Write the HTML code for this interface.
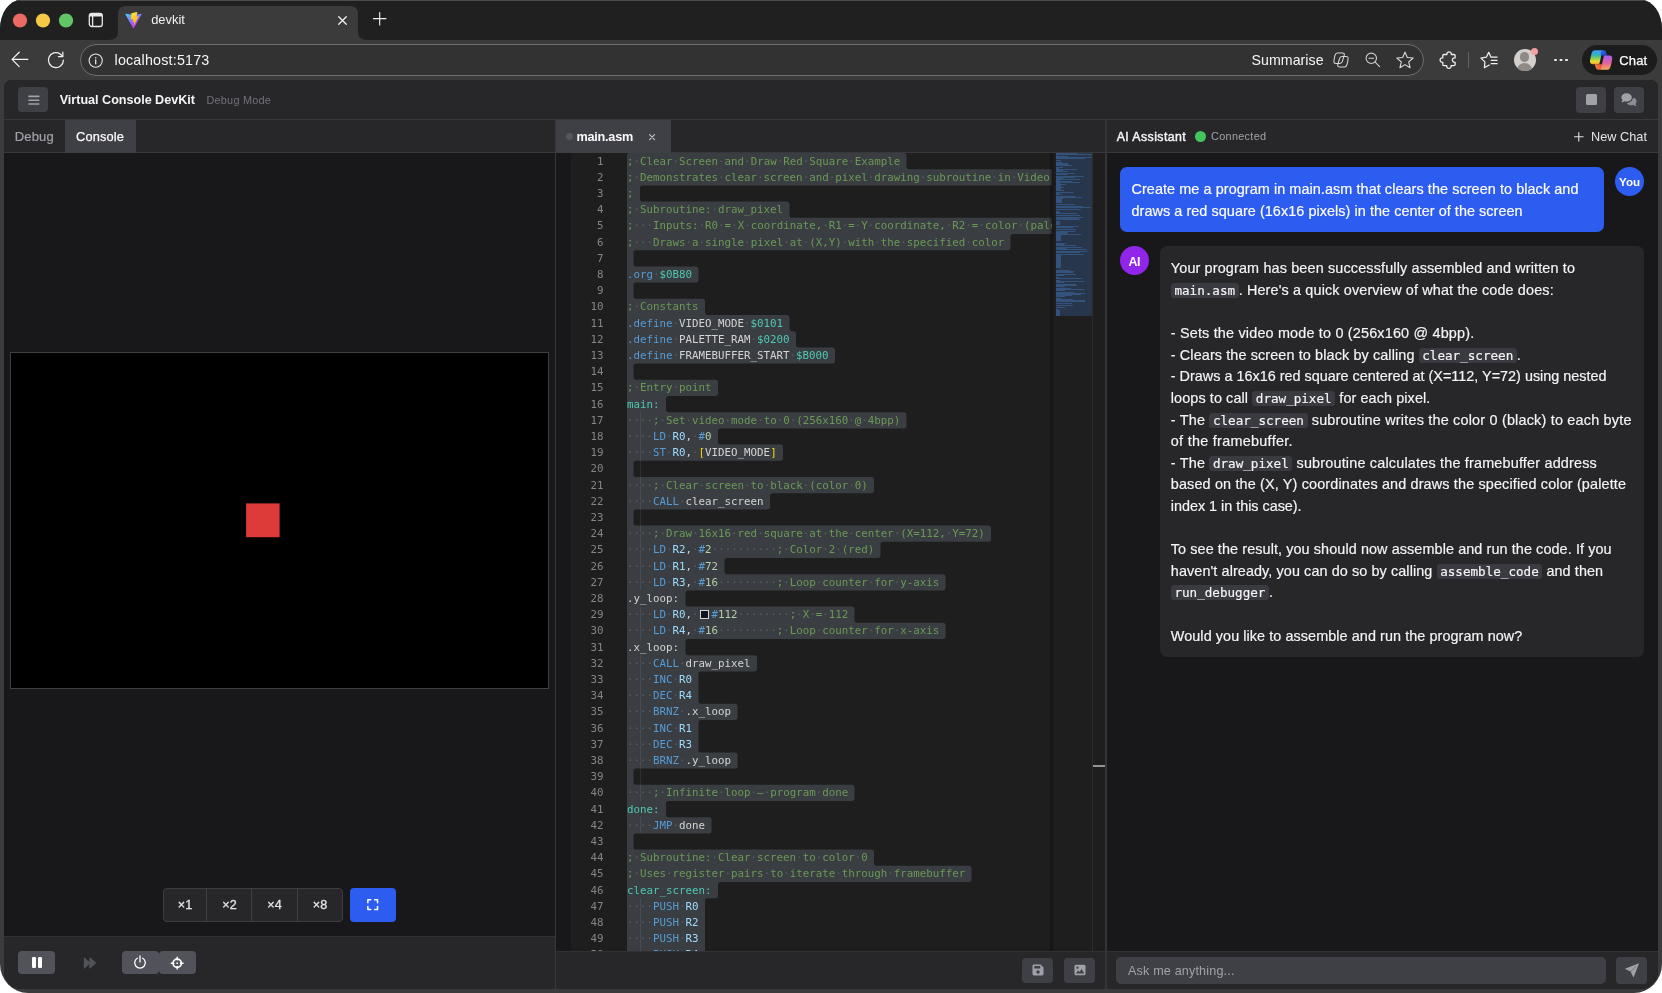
<!DOCTYPE html>
<html lang="en">
<head>
<meta charset="utf-8">
<title>devkit</title>
<style>
*{box-sizing:border-box}
html,body{margin:0;padding:0}
body{width:1662px;height:993px;overflow:hidden;background:#fff;font-family:"Liberation Sans",sans-serif;color:#e4e4e7;-webkit-font-smoothing:antialiased}
.abs{position:absolute}
#win{will-change:transform;position:absolute;left:0;top:0;width:1662px;height:993px;background:#3b3b3b;border-radius:21px 21px 28px 28px / 29px 29px 29px 29px;overflow:hidden}
#titlebar{position:absolute;left:0;top:0;width:1662px;height:40px;background:#202020;border-top:1px solid #4b4b4b}
#toolbar{position:absolute;left:0;top:40px;width:1662px;height:40px;background:#3b3b3b}
#urlbar{position:absolute;left:80px;top:44px;width:1344px;height:32px;border:1px solid #6e6e6e;border-radius:16px;background:#323232}
.ct{position:absolute;white-space:pre;line-height:1}
#page{position:absolute;left:4px;top:80px;width:1654px;height:909px;background:#18181b;border-radius:8px 8px 18px 18px;overflow:hidden}
.btn{position:absolute;background:#3f3f46;border-radius:4px}
.btn2{position:absolute;background:#52525b;border-radius:4px}
svg{position:absolute;overflow:visible}
.mono{font-family:"DejaVu Sans Mono","Liberation Mono",monospace}

.sc{top:899px;text-align:center;font-size:12.6px;color:#e4e4e7;-webkit-text-stroke:0.3px #e4e4e7}
.cl{position:absolute;white-space:pre;font-size:14.4px;line-height:21.6px;height:21.6px;-webkit-text-stroke:0.18px currentColor}
.ic{font-family:"DejaVu Sans Mono","Liberation Mono",monospace;font-size:12.6px;letter-spacing:0;background:#3a3a41;border-radius:3.6px;padding:0 3.6px}
</style>
</head>
<body>
<div id="win">
<div id="titlebar"></div>
<!-- active tab shape -->
<svg style="left:0;top:0" width="400" height="41" viewBox="0 0 400 41"><path d="M108 40 Q118 40 118 32 L118 14 Q118 6 126 6 L350 6 Q358 6 358 14 L358 32 Q358 40 367 40 L367 41 L108 41 Z" fill="#3b3b3b"/></svg>
<svg style="left:0;top:0" width="80" height="40" viewBox="0 0 80 40"><circle cx="20" cy="20.5" r="7.1" fill="#ec6a66"/><circle cx="43" cy="20.5" r="7.1" fill="#f4c945"/><circle cx="66" cy="20.5" r="7.1" fill="#62c566"/></svg>
<!-- tab overview icon -->
<svg style="left:88px;top:12px" width="16" height="16" viewBox="0 0 16 16"><rect x="1.3" y="1.3" width="13" height="13.2" rx="2.6" fill="none" stroke="#e8e8e8" stroke-width="1.3"/><path d="M1.3 4.4 L14.3 4.4 L14.3 3.6 Q14.3 1.3 12 1.3 L3.6 1.3 Q1.3 1.3 1.3 3.6 Z" fill="#e8e8e8"/><path d="M4.6 4 L4.6 14.4" stroke="#e8e8e8" stroke-width="1.3"/></svg>
<!-- vite icon -->
<svg style="left:124.5px;top:11.5px" width="17" height="17" viewBox="0 0 32 32"><defs><linearGradient id="vg1" x1="0" y1="0" x2="0.6" y2="0.85"><stop offset="0" stop-color="#41d1ff"/><stop offset="1" stop-color="#bd34fe"/></linearGradient><linearGradient id="vg2" x1="0.4" y1="0" x2="0.55" y2="1"><stop offset="0" stop-color="#ffea83"/><stop offset="0.1" stop-color="#ffdd35"/><stop offset="1" stop-color="#ffa800"/></linearGradient></defs><path d="M31 4.8 L16.9 30 a1 1 0 0 1 -1.8 0 L0.9 4.8 a1 1 0 0 1 1.1 -1.5 L16 5.8 L30 3.3 a1 1 0 0 1 1 1.5 Z" fill="url(#vg1)"/><path d="M22.6 0.2 L12.3 2.2 a0.5 0.5 0 0 0 -0.4 0.5 L11.2 13.5 a0.5 0.5 0 0 0 0.6 0.5 l2.9 -0.7 a0.5 0.5 0 0 1 0.6 0.6 l-0.9 4.2 a0.5 0.5 0 0 0 0.6 0.6 l1.8 -0.5 a0.5 0.5 0 0 1 0.6 0.6 l-1.4 6.6 c-0.1 0.4 0.5 0.6 0.7 0.3 l0.2 -0.3 8.5 -16.8 a0.5 0.5 0 0 0 -0.5 -0.7 l-3 0.6 a0.5 0.5 0 0 1 -0.6 -0.6 l1.9 -6.6 a0.5 0.5 0 0 0 -0.6 -0.6 Z" fill="url(#vg2)"/></svg>
<div class="ct" id="f_devkit" style="left:151.2px;top:13.5px;font-size:12.9px;color:#f2f2f2;letter-spacing:0.010px">devkit</div>
<svg style="left:337.8px;top:15.8px" width="9" height="9" viewBox="0 0 10 10"><path d="M0.8 0.8 L9.2 9.2 M9.2 0.8 L0.8 9.2" stroke="#f0f0f0" stroke-width="1.45" stroke-linecap="round"/></svg>
<svg style="left:372.7px;top:12.1px" width="13.4" height="13.4" viewBox="0 0 14 14"><path d="M7 0.5 L7 13.5 M0.5 7 L13.5 7" stroke="#f0f0f0" stroke-width="1.2" stroke-linecap="round"/></svg>
<div id="toolbar"></div>
<!-- back -->
<svg style="left:11px;top:51px" width="18" height="17" viewBox="0 0 18 17"><path d="M1.3 8.4 L16.8 8.4 M8.2 1.2 L1.1 8.4 L8.2 15.6" fill="none" stroke="#f2f2f2" stroke-width="1.25" stroke-linecap="round" stroke-linejoin="round"/></svg>
<!-- reload -->
<svg style="left:47px;top:51px" width="18" height="18" viewBox="0 0 18 18"><path d="M16.4 9.2 A7.5 7.5 0 1 1 12.9 2.7 L15.6 5.4" fill="none" stroke="#f2f2f2" stroke-width="1.25" stroke-linecap="round"/><path d="M15.8 1.2 L15.8 5.6 L11.4 5.6" fill="none" stroke="#f2f2f2" stroke-width="1.25" stroke-linecap="round" stroke-linejoin="round"/></svg>
<div id="urlbar"></div>
<!-- info -->
<svg style="left:88px;top:52.5px" width="16" height="16" viewBox="0 0 16 16"><circle cx="7.7" cy="7.6" r="6.6" fill="none" stroke="#e6e6e6" stroke-width="1.1"/><circle cx="7.7" cy="4.8" r="0.8" fill="#e6e6e6"/><path d="M7.7 6.8 L7.7 10.8" stroke="#e6e6e6" stroke-width="1.3" stroke-linecap="round"/></svg>
<div class="ct" id="f_url" style="left:114.5px;top:52.5px;font-size:14.3px;color:#f5f5f5;letter-spacing:0.199px">localhost:5173</div>
<div class="ct" id="f_sum" style="left:1251.5px;top:52.7px;font-size:14.2px;color:#f5f5f5;letter-spacing:0.044px">Summarise</div>
<!-- summarise/copilot glyph -->
<svg style="left:1333px;top:52px" width="16" height="16" viewBox="0 0 16 16" fill="none" stroke="#d8d8d8" stroke-width="1.05" stroke-linejoin="round"><path d="M4.4 0.9 H9.4 Q11.9 0.9 11.2 3.3 L9.3 9.6 Q8.7 11.4 6.8 11.4 H3 Q0.6 11.4 0.9 9 Q1.2 6 2 3.3 Q2.7 0.9 4.4 0.9 Z"/><path d="M11.6 14.9 H6.6 Q4.1 14.9 4.8 12.5 L6.7 6.2 Q7.3 4.4 9.2 4.4 H13 Q15.4 4.4 15.1 6.8 Q14.8 9.8 14 12.5 Q13.3 14.9 11.6 14.9 Z"/></svg>
<!-- zoom out -->
<svg style="left:1365px;top:52px" width="16" height="16" viewBox="0 0 16 16" fill="none" stroke="#cfcfcf" stroke-width="1.1" stroke-linecap="round"><circle cx="6.3" cy="6.3" r="5.2"/><path d="M10.2 10.2 L14.6 14.6 M3.9 6.3 L8.7 6.3"/></svg>
<!-- star -->
<svg style="left:1396px;top:51px" width="18" height="18" viewBox="0 0 18 18"><path d="M9.00 1.10 L11.29 6.54 L17.18 7.04 L12.71 10.91 L14.05 16.66 L9.00 13.60 L3.95 16.66 L5.29 10.91 L0.82 7.04 L6.71 6.54 Z" fill="none" stroke="#dcdcdc" stroke-width="1.1" stroke-linejoin="round"/></svg>
<!-- extensions -->
<svg style="left:1440px;top:51px" width="18" height="18" viewBox="0 0 18 18"><path d="M3.9 3.5 H6.9 A2.25 2.25 0 1 1 11.3 3.5 H14 Q15.1 3.5 15.1 4.6 V6.9 A2.25 2.25 0 1 0 15.1 11.3 V13.6 Q15.1 14.7 14 14.7 H11.1 A2.25 2.25 0 1 1 6.7 14.7 H3.9 Q2.8 14.7 2.8 13.6 V11.3 A2.25 2.25 0 1 1 2.8 6.9 V4.6 Q2.8 3.5 3.9 3.5 Z" fill="none" stroke="#f0f0f0" stroke-width="1.3" stroke-linejoin="round"/></svg>
<div class="abs" style="left:1468px;top:52px;width:1px;height:16px;background:#606060"></div>
<!-- favourites -->
<svg style="left:1480px;top:51px" width="19" height="18" viewBox="0 0 19 18" fill="none" stroke="#f0f0f0" stroke-width="1.25" stroke-linejoin="round" stroke-linecap="round"><path d="M10.9 5.9 L8.75 1.3 L6.3 6.2 L0.9 7.1 L4.9 10.9 L4.4 16.7 L9.2 14"/><path d="M11.2 6 H17.1 M11.2 9.3 H17.1 M11.2 12.7 H17.1"/></svg>
<!-- avatar -->
<div class="abs" style="left:1513.8px;top:48.8px;width:22.4px;height:22.4px;border-radius:50%;background:#d2cfcc;overflow:hidden"><div class="abs" style="left:6.1px;top:3.4px;width:9.6px;height:9.6px;border-radius:50%;background:#8f8a86"></div><div class="abs" style="left:3.4px;top:14.3px;width:15px;height:13px;border-radius:50%;background:#8f8a86"></div></div>
<div class="abs" style="left:1530.5px;top:47.8px;width:7.6px;height:7.6px;border-radius:50%;background:#f1a2a0"></div>
<!-- dots -->
<div class="abs" style="left:1554px;top:58.7px;width:2.8px;height:2.8px;border-radius:50%;background:#f0f0f0;box-shadow:5.5px 0 0 #f0f0f0,11px 0 0 #f0f0f0"></div>
<!-- chat pill -->
<div class="abs" style="left:1581.5px;top:44.5px;width:75.5px;height:30.5px;border-radius:16px;background:#1c1c1c"></div>
<svg style="left:1589px;top:49px" width="24" height="22" viewBox="0 0 24 22"><defs><linearGradient id="cg1" x1="0" y1="0" x2="0" y2="1"><stop offset="0" stop-color="#3d9bf8"/><stop offset="0.35" stop-color="#36b3b8"/><stop offset="0.6" stop-color="#8fcf52"/><stop offset="0.82" stop-color="#efdc32"/><stop offset="1" stop-color="#f0a033"/></linearGradient><linearGradient id="cg2" x1="0" y1="0" x2="0" y2="1"><stop offset="0" stop-color="#a65df6"/><stop offset="0.5" stop-color="#e0609f"/><stop offset="1" stop-color="#f8a958"/></linearGradient><linearGradient id="cg3" x1="0" y1="0" x2="1" y2="1"><stop offset="0" stop-color="#2f74ea"/><stop offset="1" stop-color="#1a3cc4"/></linearGradient><linearGradient id="cg4" x1="0" y1="0" x2="1" y2="0"><stop offset="0" stop-color="#f0813a"/><stop offset="1" stop-color="#ee5238"/></linearGradient></defs><path d="M5.6 1.2 H13.6 L10.2 15.2 H4 Q0.6 15.2 1 11.8 Q1.6 7 3 3.2 Q3.8 1.2 5.6 1.2 Z" fill="url(#cg1)"/><path d="M5.8 15.2 H13.2 L11.8 20.8 H9.4 Q7.4 20.8 6.8 18.8 Z" fill="url(#cg4)"/><path d="M12.2 1.2 H14.6 Q16.6 1.2 17.2 3.2 L18.3 6.6 H11.6 Z" fill="url(#cg3)"/><path d="M15 6.6 H20 Q23.6 6.6 23.2 10 Q22.6 15 21.2 18.6 Q20.4 20.8 18.6 20.8 H11.6 Z" fill="url(#cg2)"/></svg>
<div class="ct" id="f_chat" style="left:1619.2px;top:54.3px;font-size:13px;color:#fafafa;-webkit-text-stroke:0.25px #fafafa;letter-spacing:0.195px">Chat</div>
<div id="page"><div class="abs" id="pg" style="left:-4px;top:-80px;width:1662px;height:993px">
<!-- app header -->
<div class="abs" style="left:4px;top:80px;width:1654px;height:39.5px;background:#27272a"></div>
<div class="abs" style="left:4px;top:119px;width:1654px;height:1px;background:#37373c"></div>
<div class="btn" style="left:18px;top:87px;width:30.3px;height:25.3px"></div>
<svg style="left:27.5px;top:95px" width="12" height="11" viewBox="0 0 12 11"><path d="M1 1.4 H10.8 M1 5.2 H10.8 M1 9 H10.8" stroke="#a1a1aa" stroke-width="1.6" stroke-linecap="round"/></svg>
<div class="ct" id="f_title" style="left:59.7px;top:94.3px;font-size:12.6px;font-weight:bold;color:#f4f4f5;letter-spacing:-0.013px">Virtual Console DevKit</div>
<div class="ct" id="f_dm" style="left:206.5px;top:95.3px;font-size:10.9px;color:#71717a;letter-spacing:0.212px">Debug Mode</div>
<div class="btn" style="left:1576px;top:87px;width:30px;height:25.5px"></div>
<div class="abs" style="left:1586px;top:94.3px;width:10.5px;height:11px;border-radius:1.5px;background:#a1a1aa"></div>
<div class="btn" style="left:1613.5px;top:87px;width:30px;height:25.5px"></div>
<svg style="left:1620.5px;top:93px" width="16" height="13" viewBox="0 0 16 13"><path d="M5.6 0.3 C2.7 0.3 0.4 2.1 0.4 4.4 C0.4 5.4 0.85 6.3 1.6 7 C1.4 7.8 0.9 8.5 0.5 8.9 C0.4 9 0.5 9.2 0.7 9.2 C1.8 9.2 2.8 8.7 3.4 8.2 C4.1 8.4 4.8 8.5 5.6 8.5 C8.5 8.5 10.8 6.7 10.8 4.4 C10.8 2.1 8.5 0.3 5.6 0.3 Z" fill="#a1a1aa"/><path d="M11.9 4.6 C13.9 5 15.6 6.4 15.6 8.3 C15.6 9.3 15.15 10.2 14.4 10.9 C14.6 11.7 15.1 12.3 15.5 12.7 C15.6 12.8 15.5 13 15.3 13 C14.2 13 13.2 12.5 12.6 12 C11.9 12.2 11.2 12.3 10.4 12.3 C8.4 12.3 6.6 11.4 5.8 10 C9.2 9.9 12 7.6 12 4.6 Z" fill="#a1a1aa" opacity="0.8"/></svg>
<!-- tab rows -->
<div class="abs" style="left:4px;top:120px;width:1654px;height:32.5px;background:#27272a"></div>
<div class="abs" style="left:4px;top:152px;width:1654px;height:1px;background:#37373c"></div>
<!-- left tabs -->
<div class="abs" style="left:64.5px;top:120px;width:71px;height:32.5px;background:#3f3f46"></div>
<div class="ct" id="f_dbg" style="left:14.8px;top:130.2px;font-size:13px;color:#a1a1aa;-webkit-text-stroke:0.2px #a1a1aa;letter-spacing:0.138px">Debug</div>
<div class="ct" id="f_con" style="left:76px;top:131px;font-size:12.8px;color:#fafafa;-webkit-text-stroke:0.25px #fafafa;letter-spacing:0.164px">Console</div>
<!-- canvas -->
<div class="abs" style="left:10px;top:351.5px;width:539px;height:337.5px;background:#000;border:1px solid #3f3f46"></div>
<svg style="left:240px;top:500px" width="46" height="42" viewBox="0 0 46 42"><rect x="6.1" y="3.4" width="33.5" height="33.8" fill="#dd3a3a"/></svg>
<!-- scale buttons -->
<div class="abs" style="left:163px;top:888px;width:180px;height:34px;background:#27272a;border:1px solid #3c3c42;border-radius:4px"></div>
<div class="abs" style="left:206px;top:888px;width:1px;height:34px;background:#3f3f46"></div>
<div class="abs" style="left:251px;top:888px;width:1px;height:34px;background:#3f3f46"></div>
<div class="abs" style="left:297px;top:888px;width:1px;height:34px;background:#3f3f46"></div>
<div class="ct sc" style="left:163px;width:44px">×1</div>
<div class="ct sc" style="left:207px;width:45px">×2</div>
<div class="ct sc" style="left:252px;width:45px">×4</div>
<div class="ct sc" style="left:297px;width:46px">×8</div>
<div class="abs" style="left:350px;top:888px;width:46px;height:34px;background:#2d5cf0;border-radius:4px"></div>
<svg style="left:367.1px;top:899.1px" width="11.4" height="11.4" viewBox="0 0 12 12"><path d="M0.9 4 V0.9 H4 M8 0.9 H11.1 V4 M11.1 8 V11.1 H8 M4 11.1 H0.9 V8" fill="none" stroke="#fff" stroke-width="1.6" stroke-linejoin="round" stroke-linecap="round"/></svg>
<!-- left bottom bar -->
<div class="abs" style="left:4px;top:936px;width:551px;height:53px;background:#27272a;border-top:1px solid #303035"></div>
<div class="btn2" style="left:18px;top:951px;width:37.3px;height:23.2px"></div>
<div class="abs" style="left:32px;top:957.3px;width:3.7px;height:11.2px;border-radius:1.2px;background:#fff"></div>
<div class="abs" style="left:38.2px;top:957.3px;width:3.7px;height:11.2px;border-radius:1.2px;background:#fff"></div>
<svg style="left:82.5px;top:957px" width="14" height="12" viewBox="0 0 14 12"><path d="M0.8 0.9 Q0.8 0.1 1.5 0.6 L7.2 5.4 Q7.8 6 7.2 6.6 L1.5 11.4 Q0.8 11.9 0.8 11.1 Z" fill="#52525b"/><path d="M6.4 0.9 Q6.4 0.1 7.1 0.6 L12.8 5.4 Q13.4 6 12.8 6.6 L7.1 11.4 Q6.4 11.9 6.4 11.1 Z" fill="#52525b"/></svg>
<div class="btn2" style="left:122px;top:951px;width:36.6px;height:23.2px"></div>
<svg style="left:133.3px;top:954.9px" width="14" height="14" viewBox="0 0 14 14"><path d="M4.3 3.3 A5.3 5.3 0 1 0 9.7 3.3" fill="none" stroke="#fff" stroke-width="1.3" stroke-linecap="round"/><path d="M7 0.9 V7" stroke="#fff" stroke-width="1.3" stroke-linecap="round"/></svg>
<div class="btn2" style="left:159px;top:951px;width:37.2px;height:23.2px"></div>
<svg style="left:171.4px;top:956.5px" width="12.4" height="12.4" viewBox="0 0 13 13"><circle cx="6.5" cy="6.5" r="4.3" fill="none" stroke="#fff" stroke-width="1.8"/><path d="M6.5 0.3 V3 M6.5 10 V12.7 M0.3 6.5 H3 M10 6.5 H12.7" stroke="#fff" stroke-width="1.5" stroke-linecap="round"/><circle cx="6.5" cy="6.5" r="0.9" fill="#fff"/></svg>
<!-- divider -->
<div class="abs" style="left:555px;top:120px;width:1px;height:869px;background:#37373c"></div>
<!-- editor -->
<div class="abs" style="left:556px;top:153px;width:549px;height:798px;background:#18181b"></div>
<div class="abs mono" id="ed" style="left:571px;top:153px;width:534px;height:798px;background:#1e1e1e;overflow:hidden;font-size:10.8px;line-height:16.2px">
<div class="abs" style="left:56px;top:0;width:425px;height:798px;overflow:hidden">
<svg style="left:0;top:0" width="425" height="810" viewBox="0 0 425 810"><path d="M0 2.7 Q0 0 2.7 0 L276.8 0 Q279.5 0 279.5 2.7 L279.5 13.5 Q279.5 16.2 282.2 16.2 L471.8 16.2 Q474.5 16.2 474.5 18.9 L474.5 29.7 Q474.5 32.4 471.8 32.4 L15.7 32.4 Q13 32.4 13 35.1 L13 45.9 Q13 48.6 15.7 48.6 L159.8 48.6 Q162.5 48.6 162.5 51.3 L162.5 62.1 Q162.5 64.8 165.2 64.8 L497.8 64.8 Q500.5 64.8 500.5 67.5 L500.5 78.3 Q500.5 81 497.8 81 L386.2 81 Q383.5 81 383.5 83.7 L383.5 94.5 Q383.5 97.2 380.8 97.2 L9.2 97.2 Q6.5 97.2 6.5 99.9 L6.5 110.7 Q6.5 113.4 9.2 113.4 L68.8 113.4 Q71.5 113.4 71.5 116.1 L71.5 126.9 Q71.5 129.6 68.8 129.6 L9.2 129.6 Q6.5 129.6 6.5 132.3 L6.5 143.1 Q6.5 145.8 9.2 145.8 L75.3 145.8 Q78 145.8 78 148.5 L78 159.3 Q78 162 80.7 162 L159.8 162 Q162.5 162 162.5 164.7 L162.5 175.5 Q162.5 178.2 165.2 178.2 L166.3 178.2 Q169 178.2 169 180.9 L169 191.7 Q169 194.4 171.7 194.4 L205.3 194.4 Q208 194.4 208 197.1 L208 207.9 Q208 210.6 205.3 210.6 L9.2 210.6 Q6.5 210.6 6.5 213.3 L6.5 224.1 Q6.5 226.8 9.2 226.8 L88.3 226.8 Q91 226.8 91 229.5 L91 240.3 Q91 243 88.3 243 L41.7 243 Q39 243 39 245.7 L39 256.5 Q39 259.2 41.7 259.2 L276.8 259.2 Q279.5 259.2 279.5 261.9 L279.5 272.7 Q279.5 275.4 276.8 275.4 L93.7 275.4 Q91 275.4 91 278.1 L91 288.9 Q91 291.6 93.7 291.6 L153.3 291.6 Q156 291.6 156 294.3 L156 305.1 Q156 307.8 153.3 307.8 L9.2 307.8 Q6.5 307.8 6.5 310.5 L6.5 321.3 Q6.5 324 9.2 324 L244.3 324 Q247 324 247 326.7 L247 337.5 Q247 340.2 244.3 340.2 L145.7 340.2 Q143 340.2 143 342.9 L143 353.7 Q143 356.4 140.3 356.4 L9.2 356.4 Q6.5 356.4 6.5 359.1 L6.5 369.9 Q6.5 372.6 9.2 372.6 L361.3 372.6 Q364 372.6 364 375.3 L364 386.1 Q364 388.8 361.3 388.8 L256.2 388.8 Q253.5 388.8 253.5 391.5 L253.5 402.3 Q253.5 405 250.8 405 L100.2 405 Q97.5 405 97.5 407.7 L97.5 418.5 Q97.5 421.2 100.2 421.2 L315.8 421.2 Q318.5 421.2 318.5 423.9 L318.5 434.7 Q318.5 437.4 315.8 437.4 L61.2 437.4 Q58.5 437.4 58.5 440.1 L58.5 450.9 Q58.5 453.6 61.2 453.6 L224.8 453.6 Q227.5 453.6 227.5 456.3 L227.5 467.1 Q227.5 469.8 230.2 469.8 L315.8 469.8 Q318.5 469.8 318.5 472.5 L318.5 483.3 Q318.5 486 315.8 486 L61.2 486 Q58.5 486 58.5 488.7 L58.5 499.5 Q58.5 502.2 61.2 502.2 L127.3 502.2 Q130 502.2 130 504.9 L130 515.7 Q130 518.4 127.3 518.4 L74.2 518.4 Q71.5 518.4 71.5 521.1 L71.5 548.1 Q71.5 550.8 74.2 550.8 L107.8 550.8 Q110.5 550.8 110.5 553.5 L110.5 564.3 Q110.5 567 107.8 567 L74.2 567 Q71.5 567 71.5 569.7 L71.5 596.7 Q71.5 599.4 74.2 599.4 L107.8 599.4 Q110.5 599.4 110.5 602.1 L110.5 612.9 Q110.5 615.6 107.8 615.6 L9.2 615.6 Q6.5 615.6 6.5 618.3 L6.5 629.1 Q6.5 631.8 9.2 631.8 L224.8 631.8 Q227.5 631.8 227.5 634.5 L227.5 645.3 Q227.5 648 224.8 648 L41.7 648 Q39 648 39 650.7 L39 661.5 Q39 664.2 41.7 664.2 L81.8 664.2 Q84.5 664.2 84.5 666.9 L84.5 677.7 Q84.5 680.4 81.8 680.4 L9.2 680.4 Q6.5 680.4 6.5 683.1 L6.5 693.9 Q6.5 696.6 9.2 696.6 L244.3 696.6 Q247 696.6 247 699.3 L247 710.1 Q247 712.8 249.7 712.8 L341.8 712.8 Q344.5 712.8 344.5 715.5 L344.5 726.3 Q344.5 729 341.8 729 L93.7 729 Q91 729 91 731.7 L91 742.5 Q91 745.2 88.3 745.2 L80.7 745.2 Q78 745.2 78 747.9 L78 810 L0 810 Z" fill="#3a3d41"/></svg>
<div class="abs" style="left:13px;top:259.2px;width:1px;height:178.2px;background:rgba(255,255,255,0.075)"></div>
<div class="abs" style="left:13px;top:453.6px;width:1px;height:32.4px;background:rgba(255,255,255,0.075)"></div>
<div class="abs" style="left:13px;top:502.2px;width:1px;height:145.8px;background:rgba(255,255,255,0.075)"></div>
<div class="abs" style="left:13px;top:664.2px;width:1px;height:16.2px;background:rgba(255,255,255,0.075)"></div>
<div class="abs" style="left:13px;top:745.2px;width:1px;height:64.8px;background:rgba(255,255,255,0.075)"></div>
<div class="abs" style="left:0;top:0.6px;height:16.2px;white-space:pre;color:#d4d4d4"><span style="color:#6a9955">;<span style="color:#5c5f63">·</span>Clear<span style="color:#5c5f63">·</span>Screen<span style="color:#5c5f63">·</span>and<span style="color:#5c5f63">·</span>Draw<span style="color:#5c5f63">·</span>Red<span style="color:#5c5f63">·</span>Square<span style="color:#5c5f63">·</span>Example</span></div>
<div class="abs" style="left:0;top:16.8px;height:16.2px;white-space:pre;color:#d4d4d4"><span style="color:#6a9955">;<span style="color:#5c5f63">·</span>Demonstrates<span style="color:#5c5f63">·</span>clear<span style="color:#5c5f63">·</span>screen<span style="color:#5c5f63">·</span>and<span style="color:#5c5f63">·</span>pixel<span style="color:#5c5f63">·</span>drawing<span style="color:#5c5f63">·</span>subroutine<span style="color:#5c5f63">·</span>in<span style="color:#5c5f63">·</span>Video<span style="color:#5c5f63">·</span>Mode<span style="color:#5c5f63">·</span>0</span></div>
<div class="abs" style="left:0;top:33px;height:16.2px;white-space:pre;color:#d4d4d4"><span style="color:#6a9955">;</span></div>
<div class="abs" style="left:0;top:49.2px;height:16.2px;white-space:pre;color:#d4d4d4"><span style="color:#6a9955">;<span style="color:#5c5f63">·</span>Subroutine:<span style="color:#5c5f63">·</span>draw_pixel</span></div>
<div class="abs" style="left:0;top:65.4px;height:16.2px;white-space:pre;color:#d4d4d4"><span style="color:#6a9955">;<span style="color:#5c5f63">···</span>Inputs:<span style="color:#5c5f63">·</span>R0<span style="color:#5c5f63">·</span>=<span style="color:#5c5f63">·</span>X<span style="color:#5c5f63">·</span>coordinate,<span style="color:#5c5f63">·</span>R1<span style="color:#5c5f63">·</span>=<span style="color:#5c5f63">·</span>Y<span style="color:#5c5f63">·</span>coordinate,<span style="color:#5c5f63">·</span>R2<span style="color:#5c5f63">·</span>=<span style="color:#5c5f63">·</span>color<span style="color:#5c5f63">·</span>(palette<span style="color:#5c5f63">·</span>index)</span></div>
<div class="abs" style="left:0;top:81.6px;height:16.2px;white-space:pre;color:#d4d4d4"><span style="color:#6a9955">;<span style="color:#5c5f63">···</span>Draws<span style="color:#5c5f63">·</span>a<span style="color:#5c5f63">·</span>single<span style="color:#5c5f63">·</span>pixel<span style="color:#5c5f63">·</span>at<span style="color:#5c5f63">·</span>(X,Y)<span style="color:#5c5f63">·</span>with<span style="color:#5c5f63">·</span>the<span style="color:#5c5f63">·</span>specified<span style="color:#5c5f63">·</span>color</span></div>
<div class="abs" style="left:0;top:97.8px;height:16.2px;white-space:pre;color:#d4d4d4"></div>
<div class="abs" style="left:0;top:114px;height:16.2px;white-space:pre;color:#d4d4d4"><span style="color:#569cd6">.org</span><span style="color:#5c5f63">·</span><span style="color:#4ec9b0">$0B80</span></div>
<div class="abs" style="left:0;top:130.2px;height:16.2px;white-space:pre;color:#d4d4d4"></div>
<div class="abs" style="left:0;top:146.4px;height:16.2px;white-space:pre;color:#d4d4d4"><span style="color:#6a9955">;<span style="color:#5c5f63">·</span>Constants</span></div>
<div class="abs" style="left:0;top:162.6px;height:16.2px;white-space:pre;color:#d4d4d4"><span style="color:#569cd6">.define</span><span style="color:#5c5f63">·</span><span style="color:#d4d4d4">VIDEO_MODE</span><span style="color:#5c5f63">·</span><span style="color:#4ec9b0">$0101</span></div>
<div class="abs" style="left:0;top:178.8px;height:16.2px;white-space:pre;color:#d4d4d4"><span style="color:#569cd6">.define</span><span style="color:#5c5f63">·</span><span style="color:#d4d4d4">PALETTE_RAM</span><span style="color:#5c5f63">·</span><span style="color:#4ec9b0">$0200</span></div>
<div class="abs" style="left:0;top:195px;height:16.2px;white-space:pre;color:#d4d4d4"><span style="color:#569cd6">.define</span><span style="color:#5c5f63">·</span><span style="color:#d4d4d4">FRAMEBUFFER_START</span><span style="color:#5c5f63">·</span><span style="color:#4ec9b0">$B000</span></div>
<div class="abs" style="left:0;top:211.2px;height:16.2px;white-space:pre;color:#d4d4d4"></div>
<div class="abs" style="left:0;top:227.4px;height:16.2px;white-space:pre;color:#d4d4d4"><span style="color:#6a9955">;<span style="color:#5c5f63">·</span>Entry<span style="color:#5c5f63">·</span>point</span></div>
<div class="abs" style="left:0;top:243.6px;height:16.2px;white-space:pre;color:#d4d4d4"><span style="color:#4ec9b0">main:</span></div>
<div class="abs" style="left:0;top:259.8px;height:16.2px;white-space:pre;color:#d4d4d4"><span style="color:#5c5f63">····</span><span style="color:#6a9955">;<span style="color:#5c5f63">·</span>Set<span style="color:#5c5f63">·</span>video<span style="color:#5c5f63">·</span>mode<span style="color:#5c5f63">·</span>to<span style="color:#5c5f63">·</span>0<span style="color:#5c5f63">·</span>(256x160<span style="color:#5c5f63">·</span>@<span style="color:#5c5f63">·</span>4bpp)</span></div>
<div class="abs" style="left:0;top:276px;height:16.2px;white-space:pre;color:#d4d4d4"><span style="color:#5c5f63">····</span><span style="color:#569cd6">LD</span><span style="color:#5c5f63">·</span><span style="color:#9cdcfe">R0</span><span style="color:#d4d4d4">,</span><span style="color:#5c5f63">·</span><span style="color:#569cd6">#</span><span style="color:#b5cea8">0</span></div>
<div class="abs" style="left:0;top:292.2px;height:16.2px;white-space:pre;color:#d4d4d4"><span style="color:#5c5f63">····</span><span style="color:#569cd6">ST</span><span style="color:#5c5f63">·</span><span style="color:#9cdcfe">R0</span><span style="color:#d4d4d4">,</span><span style="color:#5c5f63">·</span><span style="color:#ffd700">[</span><span style="color:#d4d4d4">VIDEO_MODE</span><span style="color:#ffd700">]</span></div>
<div class="abs" style="left:0;top:308.4px;height:16.2px;white-space:pre;color:#d4d4d4"></div>
<div class="abs" style="left:0;top:324.6px;height:16.2px;white-space:pre;color:#d4d4d4"><span style="color:#5c5f63">····</span><span style="color:#6a9955">;<span style="color:#5c5f63">·</span>Clear<span style="color:#5c5f63">·</span>screen<span style="color:#5c5f63">·</span>to<span style="color:#5c5f63">·</span>black<span style="color:#5c5f63">·</span>(color<span style="color:#5c5f63">·</span>0)</span></div>
<div class="abs" style="left:0;top:340.8px;height:16.2px;white-space:pre;color:#d4d4d4"><span style="color:#5c5f63">····</span><span style="color:#569cd6">CALL</span><span style="color:#5c5f63">·</span><span style="color:#d4d4d4">clear_screen</span></div>
<div class="abs" style="left:0;top:357px;height:16.2px;white-space:pre;color:#d4d4d4"></div>
<div class="abs" style="left:0;top:373.2px;height:16.2px;white-space:pre;color:#d4d4d4"><span style="color:#5c5f63">····</span><span style="color:#6a9955">;<span style="color:#5c5f63">·</span>Draw<span style="color:#5c5f63">·</span>16x16<span style="color:#5c5f63">·</span>red<span style="color:#5c5f63">·</span>square<span style="color:#5c5f63">·</span>at<span style="color:#5c5f63">·</span>the<span style="color:#5c5f63">·</span>center<span style="color:#5c5f63">·</span>(X=112,<span style="color:#5c5f63">·</span>Y=72)</span></div>
<div class="abs" style="left:0;top:389.4px;height:16.2px;white-space:pre;color:#d4d4d4"><span style="color:#5c5f63">····</span><span style="color:#569cd6">LD</span><span style="color:#5c5f63">·</span><span style="color:#9cdcfe">R2</span><span style="color:#d4d4d4">,</span><span style="color:#5c5f63">·</span><span style="color:#569cd6">#</span><span style="color:#b5cea8">2</span><span style="color:#5c5f63">··········</span><span style="color:#6a9955">;<span style="color:#5c5f63">·</span>Color<span style="color:#5c5f63">·</span>2<span style="color:#5c5f63">·</span>(red)</span></div>
<div class="abs" style="left:0;top:405.6px;height:16.2px;white-space:pre;color:#d4d4d4"><span style="color:#5c5f63">····</span><span style="color:#569cd6">LD</span><span style="color:#5c5f63">·</span><span style="color:#9cdcfe">R1</span><span style="color:#d4d4d4">,</span><span style="color:#5c5f63">·</span><span style="color:#569cd6">#</span><span style="color:#b5cea8">72</span></div>
<div class="abs" style="left:0;top:421.8px;height:16.2px;white-space:pre;color:#d4d4d4"><span style="color:#5c5f63">····</span><span style="color:#569cd6">LD</span><span style="color:#5c5f63">·</span><span style="color:#9cdcfe">R3</span><span style="color:#d4d4d4">,</span><span style="color:#5c5f63">·</span><span style="color:#569cd6">#</span><span style="color:#b5cea8">16</span><span style="color:#5c5f63">·········</span><span style="color:#6a9955">;<span style="color:#5c5f63">·</span>Loop<span style="color:#5c5f63">·</span>counter<span style="color:#5c5f63">·</span>for<span style="color:#5c5f63">·</span>y-axis</span></div>
<div class="abs" style="left:0;top:438px;height:16.2px;white-space:pre;color:#d4d4d4"><span style="color:#d4d4d4">.y_loop:</span></div>
<div class="abs" style="left:0;top:454.2px;height:16.2px;white-space:pre;color:#d4d4d4"><span style="color:#5c5f63">····</span><span style="color:#569cd6">LD</span><span style="color:#5c5f63">·</span><span style="color:#9cdcfe">R0</span><span style="color:#d4d4d4">,</span><span style="color:#5c5f63">·</span><span style="display:inline-block;width:13px;height:8px;position:relative"><span style="position:absolute;left:1.8px;top:-0.4px;width:8.8px;height:8.8px;border:1px solid #d8d8d8;background:#111122;box-sizing:border-box"></span></span><span style="color:#569cd6">#</span><span style="color:#b5cea8">112</span><span style="color:#5c5f63">········</span><span style="color:#6a9955">;<span style="color:#5c5f63">·</span>X<span style="color:#5c5f63">·</span>=<span style="color:#5c5f63">·</span>112</span></div>
<div class="abs" style="left:0;top:470.4px;height:16.2px;white-space:pre;color:#d4d4d4"><span style="color:#5c5f63">····</span><span style="color:#569cd6">LD</span><span style="color:#5c5f63">·</span><span style="color:#9cdcfe">R4</span><span style="color:#d4d4d4">,</span><span style="color:#5c5f63">·</span><span style="color:#569cd6">#</span><span style="color:#b5cea8">16</span><span style="color:#5c5f63">·········</span><span style="color:#6a9955">;<span style="color:#5c5f63">·</span>Loop<span style="color:#5c5f63">·</span>counter<span style="color:#5c5f63">·</span>for<span style="color:#5c5f63">·</span>x-axis</span></div>
<div class="abs" style="left:0;top:486.6px;height:16.2px;white-space:pre;color:#d4d4d4"><span style="color:#d4d4d4">.x_loop:</span></div>
<div class="abs" style="left:0;top:502.8px;height:16.2px;white-space:pre;color:#d4d4d4"><span style="color:#5c5f63">····</span><span style="color:#569cd6">CALL</span><span style="color:#5c5f63">·</span><span style="color:#d4d4d4">draw_pixel</span></div>
<div class="abs" style="left:0;top:519px;height:16.2px;white-space:pre;color:#d4d4d4"><span style="color:#5c5f63">····</span><span style="color:#569cd6">INC</span><span style="color:#5c5f63">·</span><span style="color:#9cdcfe">R0</span></div>
<div class="abs" style="left:0;top:535.2px;height:16.2px;white-space:pre;color:#d4d4d4"><span style="color:#5c5f63">····</span><span style="color:#569cd6">DEC</span><span style="color:#5c5f63">·</span><span style="color:#9cdcfe">R4</span></div>
<div class="abs" style="left:0;top:551.4px;height:16.2px;white-space:pre;color:#d4d4d4"><span style="color:#5c5f63">····</span><span style="color:#569cd6">BRNZ</span><span style="color:#5c5f63">·</span><span style="color:#d4d4d4">.x_loop</span></div>
<div class="abs" style="left:0;top:567.6px;height:16.2px;white-space:pre;color:#d4d4d4"><span style="color:#5c5f63">····</span><span style="color:#569cd6">INC</span><span style="color:#5c5f63">·</span><span style="color:#9cdcfe">R1</span></div>
<div class="abs" style="left:0;top:583.8px;height:16.2px;white-space:pre;color:#d4d4d4"><span style="color:#5c5f63">····</span><span style="color:#569cd6">DEC</span><span style="color:#5c5f63">·</span><span style="color:#9cdcfe">R3</span></div>
<div class="abs" style="left:0;top:600px;height:16.2px;white-space:pre;color:#d4d4d4"><span style="color:#5c5f63">····</span><span style="color:#569cd6">BRNZ</span><span style="color:#5c5f63">·</span><span style="color:#d4d4d4">.y_loop</span></div>
<div class="abs" style="left:0;top:616.2px;height:16.2px;white-space:pre;color:#d4d4d4"></div>
<div class="abs" style="left:0;top:632.4px;height:16.2px;white-space:pre;color:#d4d4d4"><span style="color:#5c5f63">····</span><span style="color:#6a9955">;<span style="color:#5c5f63">·</span>Infinite<span style="color:#5c5f63">·</span>loop<span style="color:#5c5f63">·</span>–<span style="color:#5c5f63">·</span>program<span style="color:#5c5f63">·</span>done</span></div>
<div class="abs" style="left:0;top:648.6px;height:16.2px;white-space:pre;color:#d4d4d4"><span style="color:#4ec9b0">done:</span></div>
<div class="abs" style="left:0;top:664.8px;height:16.2px;white-space:pre;color:#d4d4d4"><span style="color:#5c5f63">····</span><span style="color:#569cd6">JMP</span><span style="color:#5c5f63">·</span><span style="color:#d4d4d4">done</span></div>
<div class="abs" style="left:0;top:681px;height:16.2px;white-space:pre;color:#d4d4d4"></div>
<div class="abs" style="left:0;top:697.2px;height:16.2px;white-space:pre;color:#d4d4d4"><span style="color:#6a9955">;<span style="color:#5c5f63">·</span>Subroutine:<span style="color:#5c5f63">·</span>Clear<span style="color:#5c5f63">·</span>screen<span style="color:#5c5f63">·</span>to<span style="color:#5c5f63">·</span>color<span style="color:#5c5f63">·</span>0</span></div>
<div class="abs" style="left:0;top:713.4px;height:16.2px;white-space:pre;color:#d4d4d4"><span style="color:#6a9955">;<span style="color:#5c5f63">·</span>Uses<span style="color:#5c5f63">·</span>register<span style="color:#5c5f63">·</span>pairs<span style="color:#5c5f63">·</span>to<span style="color:#5c5f63">·</span>iterate<span style="color:#5c5f63">·</span>through<span style="color:#5c5f63">·</span>framebuffer</span></div>
<div class="abs" style="left:0;top:729.6px;height:16.2px;white-space:pre;color:#d4d4d4"><span style="color:#4ec9b0">clear_screen:</span></div>
<div class="abs" style="left:0;top:745.8px;height:16.2px;white-space:pre;color:#d4d4d4"><span style="color:#5c5f63">····</span><span style="color:#569cd6">PUSH</span><span style="color:#5c5f63">·</span><span style="color:#9cdcfe">R0</span></div>
<div class="abs" style="left:0;top:762px;height:16.2px;white-space:pre;color:#d4d4d4"><span style="color:#5c5f63">····</span><span style="color:#569cd6">PUSH</span><span style="color:#5c5f63">·</span><span style="color:#9cdcfe">R2</span></div>
<div class="abs" style="left:0;top:778.2px;height:16.2px;white-space:pre;color:#d4d4d4"><span style="color:#5c5f63">····</span><span style="color:#569cd6">PUSH</span><span style="color:#5c5f63">·</span><span style="color:#9cdcfe">R3</span></div>
<div class="abs" style="left:0;top:794.4px;height:16.2px;white-space:pre;color:#d4d4d4"><span style="color:#5c5f63">····</span><span style="color:#569cd6">PUSH</span><span style="color:#5c5f63">·</span><span style="color:#9cdcfe">R4</span></div>
</div>
<div class="abs" style="left:0;top:0.6px;width:32.6px;text-align:right;color:#858585;height:16.2px">1</div>
<div class="abs" style="left:0;top:16.8px;width:32.6px;text-align:right;color:#858585;height:16.2px">2</div>
<div class="abs" style="left:0;top:33px;width:32.6px;text-align:right;color:#858585;height:16.2px">3</div>
<div class="abs" style="left:0;top:49.2px;width:32.6px;text-align:right;color:#858585;height:16.2px">4</div>
<div class="abs" style="left:0;top:65.4px;width:32.6px;text-align:right;color:#858585;height:16.2px">5</div>
<div class="abs" style="left:0;top:81.6px;width:32.6px;text-align:right;color:#858585;height:16.2px">6</div>
<div class="abs" style="left:0;top:97.8px;width:32.6px;text-align:right;color:#858585;height:16.2px">7</div>
<div class="abs" style="left:0;top:114px;width:32.6px;text-align:right;color:#858585;height:16.2px">8</div>
<div class="abs" style="left:0;top:130.2px;width:32.6px;text-align:right;color:#858585;height:16.2px">9</div>
<div class="abs" style="left:0;top:146.4px;width:32.6px;text-align:right;color:#858585;height:16.2px">10</div>
<div class="abs" style="left:0;top:162.6px;width:32.6px;text-align:right;color:#858585;height:16.2px">11</div>
<div class="abs" style="left:0;top:178.8px;width:32.6px;text-align:right;color:#858585;height:16.2px">12</div>
<div class="abs" style="left:0;top:195px;width:32.6px;text-align:right;color:#858585;height:16.2px">13</div>
<div class="abs" style="left:0;top:211.2px;width:32.6px;text-align:right;color:#858585;height:16.2px">14</div>
<div class="abs" style="left:0;top:227.4px;width:32.6px;text-align:right;color:#858585;height:16.2px">15</div>
<div class="abs" style="left:0;top:243.6px;width:32.6px;text-align:right;color:#858585;height:16.2px">16</div>
<div class="abs" style="left:0;top:259.8px;width:32.6px;text-align:right;color:#858585;height:16.2px">17</div>
<div class="abs" style="left:0;top:276px;width:32.6px;text-align:right;color:#858585;height:16.2px">18</div>
<div class="abs" style="left:0;top:292.2px;width:32.6px;text-align:right;color:#858585;height:16.2px">19</div>
<div class="abs" style="left:0;top:308.4px;width:32.6px;text-align:right;color:#858585;height:16.2px">20</div>
<div class="abs" style="left:0;top:324.6px;width:32.6px;text-align:right;color:#858585;height:16.2px">21</div>
<div class="abs" style="left:0;top:340.8px;width:32.6px;text-align:right;color:#858585;height:16.2px">22</div>
<div class="abs" style="left:0;top:357px;width:32.6px;text-align:right;color:#858585;height:16.2px">23</div>
<div class="abs" style="left:0;top:373.2px;width:32.6px;text-align:right;color:#858585;height:16.2px">24</div>
<div class="abs" style="left:0;top:389.4px;width:32.6px;text-align:right;color:#858585;height:16.2px">25</div>
<div class="abs" style="left:0;top:405.6px;width:32.6px;text-align:right;color:#858585;height:16.2px">26</div>
<div class="abs" style="left:0;top:421.8px;width:32.6px;text-align:right;color:#858585;height:16.2px">27</div>
<div class="abs" style="left:0;top:438px;width:32.6px;text-align:right;color:#858585;height:16.2px">28</div>
<div class="abs" style="left:0;top:454.2px;width:32.6px;text-align:right;color:#858585;height:16.2px">29</div>
<div class="abs" style="left:0;top:470.4px;width:32.6px;text-align:right;color:#858585;height:16.2px">30</div>
<div class="abs" style="left:0;top:486.6px;width:32.6px;text-align:right;color:#858585;height:16.2px">31</div>
<div class="abs" style="left:0;top:502.8px;width:32.6px;text-align:right;color:#858585;height:16.2px">32</div>
<div class="abs" style="left:0;top:519px;width:32.6px;text-align:right;color:#858585;height:16.2px">33</div>
<div class="abs" style="left:0;top:535.2px;width:32.6px;text-align:right;color:#858585;height:16.2px">34</div>
<div class="abs" style="left:0;top:551.4px;width:32.6px;text-align:right;color:#858585;height:16.2px">35</div>
<div class="abs" style="left:0;top:567.6px;width:32.6px;text-align:right;color:#858585;height:16.2px">36</div>
<div class="abs" style="left:0;top:583.8px;width:32.6px;text-align:right;color:#858585;height:16.2px">37</div>
<div class="abs" style="left:0;top:600px;width:32.6px;text-align:right;color:#858585;height:16.2px">38</div>
<div class="abs" style="left:0;top:616.2px;width:32.6px;text-align:right;color:#858585;height:16.2px">39</div>
<div class="abs" style="left:0;top:632.4px;width:32.6px;text-align:right;color:#858585;height:16.2px">40</div>
<div class="abs" style="left:0;top:648.6px;width:32.6px;text-align:right;color:#858585;height:16.2px">41</div>
<div class="abs" style="left:0;top:664.8px;width:32.6px;text-align:right;color:#858585;height:16.2px">42</div>
<div class="abs" style="left:0;top:681px;width:32.6px;text-align:right;color:#858585;height:16.2px">43</div>
<div class="abs" style="left:0;top:697.2px;width:32.6px;text-align:right;color:#858585;height:16.2px">44</div>
<div class="abs" style="left:0;top:713.4px;width:32.6px;text-align:right;color:#858585;height:16.2px">45</div>
<div class="abs" style="left:0;top:729.6px;width:32.6px;text-align:right;color:#858585;height:16.2px">46</div>
<div class="abs" style="left:0;top:745.8px;width:32.6px;text-align:right;color:#858585;height:16.2px">47</div>
<div class="abs" style="left:0;top:762px;width:32.6px;text-align:right;color:#858585;height:16.2px">48</div>
<div class="abs" style="left:0;top:778.2px;width:32.6px;text-align:right;color:#858585;height:16.2px">49</div>
<div class="abs" style="left:0;top:794.4px;width:32.6px;text-align:right;color:#858585;height:16.2px">50</div>
<div class="abs" style="left:477.5px;top:0;width:5px;height:798px;background:linear-gradient(to right,rgba(0,0,0,0),rgba(0,0,0,0.35) 55%,rgba(0,0,0,0.05))"></div>
<div class="abs" style="left:485px;top:0;width:36.2px;height:162.6px;background:#27364b;overflow:hidden">
<div class="abs" style="left:0;top:0px;width:21px;height:0.993px;background:#34537c"></div>
<div class="abs" style="left:0;top:0.99px;width:36px;height:0.993px;background:#34537c"></div>
<div class="abs" style="left:0;top:1.99px;width:0.5px;height:0.993px;background:#34537c"></div>
<div class="abs" style="left:0;top:2.98px;width:12px;height:0.993px;background:#34537c"></div>
<div class="abs" style="left:0;top:3.97px;width:36.2px;height:0.993px;background:#34537c"></div>
<div class="abs" style="left:0;top:4.96px;width:29px;height:0.993px;background:#34537c"></div>
<div class="abs" style="left:0;top:6.95px;width:5px;height:0.993px;background:#34537c"></div>
<div class="abs" style="left:0;top:8.94px;width:5.5px;height:0.993px;background:#34537c"></div>
<div class="abs" style="left:0;top:9.93px;width:12px;height:0.993px;background:#34537c"></div>
<div class="abs" style="left:0;top:10.92px;width:12.5px;height:0.993px;background:#34537c"></div>
<div class="abs" style="left:0;top:11.92px;width:15.5px;height:0.993px;background:#34537c"></div>
<div class="abs" style="left:0;top:13.9px;width:6.5px;height:0.993px;background:#34537c"></div>
<div class="abs" style="left:0;top:14.89px;width:2.5px;height:0.993px;background:#34537c"></div>
<div class="abs" style="left:0;top:15.89px;width:21px;height:0.993px;background:#34537c"></div>
<div class="abs" style="left:0;top:16.88px;width:6.5px;height:0.993px;background:#34537c"></div>
<div class="abs" style="left:0;top:17.87px;width:11.5px;height:0.993px;background:#34537c"></div>
<div class="abs" style="left:0;top:19.86px;width:18.5px;height:0.993px;background:#34537c"></div>
<div class="abs" style="left:0;top:20.85px;width:10.5px;height:0.993px;background:#34537c"></div>
<div class="abs" style="left:0;top:22.84px;width:27.5px;height:0.993px;background:#34537c"></div>
<div class="abs" style="left:0;top:23.83px;width:19px;height:0.993px;background:#34537c"></div>
<div class="abs" style="left:0;top:24.82px;width:7px;height:0.993px;background:#34537c"></div>
<div class="abs" style="left:0;top:25.82px;width:24px;height:0.993px;background:#34537c"></div>
<div class="abs" style="left:0;top:26.81px;width:4px;height:0.993px;background:#34537c"></div>
<div class="abs" style="left:0;top:27.8px;width:16px;height:0.993px;background:#34537c"></div>
<div class="abs" style="left:0;top:28.8px;width:24px;height:0.993px;background:#34537c"></div>
<div class="abs" style="left:0;top:29.79px;width:4px;height:0.993px;background:#34537c"></div>
<div class="abs" style="left:0;top:30.78px;width:9.5px;height:0.993px;background:#34537c"></div>
<div class="abs" style="left:0;top:31.78px;width:5px;height:0.993px;background:#34537c"></div>
<div class="abs" style="left:0;top:32.77px;width:5px;height:0.993px;background:#34537c"></div>
<div class="abs" style="left:0;top:33.76px;width:8px;height:0.993px;background:#34537c"></div>
<div class="abs" style="left:0;top:34.76px;width:5px;height:0.993px;background:#34537c"></div>
<div class="abs" style="left:0;top:35.75px;width:5px;height:0.993px;background:#34537c"></div>
<div class="abs" style="left:0;top:36.74px;width:8px;height:0.993px;background:#34537c"></div>
<div class="abs" style="left:0;top:38.73px;width:17px;height:0.993px;background:#34537c"></div>
<div class="abs" style="left:0;top:39.72px;width:2.5px;height:0.993px;background:#34537c"></div>
<div class="abs" style="left:0;top:40.71px;width:6px;height:0.993px;background:#34537c"></div>
<div class="abs" style="left:0;top:42.7px;width:18.5px;height:0.993px;background:#34537c"></div>
<div class="abs" style="left:0;top:43.69px;width:26px;height:0.993px;background:#34537c"></div>
<div class="abs" style="left:0;top:44.69px;width:6.5px;height:0.993px;background:#34537c"></div>
<div class="abs" style="left:0;top:45.68px;width:5.5px;height:0.993px;background:#34537c"></div>
<div class="abs" style="left:0;top:46.67px;width:5.5px;height:0.993px;background:#34537c"></div>
<div class="abs" style="left:0;top:47.66px;width:5.5px;height:0.993px;background:#34537c"></div>
<div class="abs" style="left:0;top:48.66px;width:5.5px;height:0.993px;background:#34537c"></div>
<div class="abs" style="left:0;top:50.64px;width:18.8px;height:0.993px;background:#34537c"></div>
<div class="abs" style="left:0;top:52.63px;width:27px;height:0.993px;background:#34537c"></div>
<div class="abs" style="left:0;top:53.62px;width:35.1px;height:0.993px;background:#34537c"></div>
<div class="abs" style="left:0;top:55.61px;width:25.3px;height:0.993px;background:#34537c"></div>
<div class="abs" style="left:0;top:57.59px;width:3px;height:0.993px;background:#34537c"></div>
<div class="abs" style="left:0;top:58.59px;width:4.3px;height:0.993px;background:#34537c"></div>
<div class="abs" style="left:0;top:59.58px;width:21.4px;height:0.993px;background:#34537c"></div>
<div class="abs" style="left:0;top:61.57px;width:24px;height:0.993px;background:#34537c"></div>
<div class="abs" style="left:0;top:63.55px;width:27.4px;height:0.993px;background:#34537c"></div>
<div class="abs" style="left:0;top:64.55px;width:23.1px;height:0.993px;background:#34537c"></div>
<div class="abs" style="left:0;top:65.54px;width:24.4px;height:0.993px;background:#34537c"></div>
<div class="abs" style="left:0;top:67.52px;width:4.3px;height:0.993px;background:#34537c"></div>
<div class="abs" style="left:0;top:68.52px;width:4.3px;height:0.993px;background:#34537c"></div>
<div class="abs" style="left:0;top:69.51px;width:4.3px;height:0.993px;background:#34537c"></div>
<div class="abs" style="left:0;top:70.5px;width:4.3px;height:0.993px;background:#34537c"></div>
<div class="abs" style="left:0;top:73.48px;width:21.8px;height:0.993px;background:#34537c"></div>
<div class="abs" style="left:0;top:74.47px;width:17.1px;height:0.993px;background:#34537c"></div>
<div class="abs" style="left:0;top:76.46px;width:20.1px;height:0.993px;background:#34537c"></div>
<div class="abs" style="left:0;top:78.45px;width:18.8px;height:0.993px;background:#34537c"></div>
<div class="abs" style="left:0;top:79.44px;width:12px;height:0.993px;background:#34537c"></div>
<div class="abs" style="left:0;top:80.43px;width:11.1px;height:0.993px;background:#34537c"></div>
<div class="abs" style="left:0;top:81.43px;width:25.3px;height:0.993px;background:#34537c"></div>
<div class="abs" style="left:0;top:82.42px;width:5.3px;height:0.993px;background:#34537c"></div>
<div class="abs" style="left:0;top:83.41px;width:5.3px;height:0.993px;background:#34537c"></div>
<div class="abs" style="left:0;top:84.41px;width:5.3px;height:0.993px;background:#34537c"></div>
<div class="abs" style="left:0;top:85.4px;width:5.3px;height:0.993px;background:#34537c"></div>
<div class="abs" style="left:0;top:86.39px;width:5.3px;height:0.993px;background:#34537c"></div>
<div class="abs" style="left:0;top:87.38px;width:5.3px;height:0.993px;background:#34537c"></div>
<div class="abs" style="left:0;top:90.36px;width:9.8px;height:0.993px;background:#34537c"></div>
<div class="abs" style="left:0;top:91.36px;width:8.4px;height:0.993px;background:#34537c"></div>
<div class="abs" style="left:0;top:92.35px;width:20.4px;height:0.993px;background:#34537c"></div>
<div class="abs" style="left:0;top:94.33px;width:26.2px;height:0.993px;background:#34537c"></div>
<div class="abs" style="left:0;top:95.33px;width:11.1px;height:0.993px;background:#34537c"></div>
<div class="abs" style="left:0;top:96.32px;width:30.6px;height:0.993px;background:#34537c"></div>
<div class="abs" style="left:0;top:98.31px;width:31.5px;height:0.993px;background:#34537c"></div>
<div class="abs" style="left:0;top:99.3px;width:23.5px;height:0.993px;background:#34537c"></div>
<div class="abs" style="left:0;top:101.29px;width:28.4px;height:0.993px;background:#34537c"></div>
<div class="abs" style="left:0;top:102.28px;width:4.9px;height:0.993px;background:#34537c"></div>
<div class="abs" style="left:0;top:103.27px;width:4.9px;height:0.993px;background:#34537c"></div>
<div class="abs" style="left:0;top:104.27px;width:4.9px;height:0.993px;background:#34537c"></div>
<div class="abs" style="left:0;top:105.26px;width:4.9px;height:0.993px;background:#34537c"></div>
<div class="abs" style="left:0;top:106.25px;width:4.9px;height:0.993px;background:#34537c"></div>
<div class="abs" style="left:0;top:107.24px;width:4.9px;height:0.993px;background:#34537c"></div>
<div class="abs" style="left:0;top:108.24px;width:4.9px;height:0.993px;background:#34537c"></div>
<div class="abs" style="left:0;top:109.23px;width:4.9px;height:0.993px;background:#34537c"></div>
<div class="abs" style="left:0;top:110.22px;width:4.9px;height:0.993px;background:#34537c"></div>
<div class="abs" style="left:0;top:111.22px;width:4.9px;height:0.993px;background:#34537c"></div>
<div class="abs" style="left:0;top:112.21px;width:4.9px;height:0.993px;background:#34537c"></div>
<div class="abs" style="left:0;top:113.2px;width:4.9px;height:0.993px;background:#34537c"></div>
<div class="abs" style="left:0;top:114.19px;width:4.9px;height:0.993px;background:#34537c"></div>
<div class="abs" style="left:0;top:117.17px;width:14.2px;height:0.993px;background:#34537c"></div>
<div class="abs" style="left:0;top:118.17px;width:18.2px;height:0.993px;background:#34537c"></div>
<div class="abs" style="left:0;top:119.16px;width:17.3px;height:0.993px;background:#34537c"></div>
<div class="abs" style="left:0;top:121.15px;width:19.9px;height:0.993px;background:#34537c"></div>
<div class="abs" style="left:0;top:122.14px;width:8.4px;height:0.993px;background:#34537c"></div>
<div class="abs" style="left:0;top:124.12px;width:3.1px;height:0.993px;background:#34537c"></div>
<div class="abs" style="left:0;top:125.12px;width:26.2px;height:0.993px;background:#34537c"></div>
<div class="abs" style="left:0;top:127.1px;width:4.4px;height:0.993px;background:#34537c"></div>
<div class="abs" style="left:0;top:128.1px;width:27.9px;height:0.993px;background:#34537c"></div>
<div class="abs" style="left:0;top:129.09px;width:8px;height:0.993px;background:#34537c"></div>
<div class="abs" style="left:0;top:131.08px;width:20.4px;height:0.993px;background:#34537c"></div>
<div class="abs" style="left:0;top:132.07px;width:21.3px;height:0.993px;background:#34537c"></div>
<div class="abs" style="left:0;top:133.06px;width:8.9px;height:0.993px;background:#34537c"></div>
<div class="abs" style="left:0;top:135.05px;width:15.1px;height:0.993px;background:#34537c"></div>
<div class="abs" style="left:0;top:136.04px;width:28.4px;height:0.993px;background:#34537c"></div>
<div class="abs" style="left:0;top:137.03px;width:9.3px;height:0.993px;background:#34537c"></div>
<div class="abs" style="left:0;top:139.02px;width:17.7px;height:0.993px;background:#34537c"></div>
<div class="abs" style="left:0;top:140.01px;width:29.3px;height:0.993px;background:#34537c"></div>
<div class="abs" style="left:0;top:141.01px;width:25.3px;height:0.993px;background:#34537c"></div>
<div class="abs" style="left:0;top:142px;width:16px;height:0.993px;background:#34537c"></div>
<div class="abs" style="left:0;top:142.99px;width:9.3px;height:0.993px;background:#34537c"></div>
<div class="abs" style="left:0;top:144.98px;width:5.3px;height:0.993px;background:#34537c"></div>
<div class="abs" style="left:0;top:145.97px;width:16.8px;height:0.993px;background:#34537c"></div>
<div class="abs" style="left:0;top:146.96px;width:29.3px;height:0.993px;background:#34537c"></div>
<div class="abs" style="left:0;top:147.96px;width:29.3px;height:0.993px;background:#34537c"></div>
<div class="abs" style="left:0;top:149.94px;width:15.5px;height:0.993px;background:#34537c"></div>
<div class="abs" style="left:0;top:151.93px;width:16.8px;height:0.993px;background:#34537c"></div>
<div class="abs" style="left:0;top:153.91px;width:8.9px;height:0.993px;background:#34537c"></div>
<div class="abs" style="left:0;top:155.9px;width:2.2px;height:0.993px;background:#34537c"></div>
<div class="abs" style="left:0;top:156.89px;width:4.4px;height:0.993px;background:#34537c"></div>
<div class="abs" style="left:0;top:157.89px;width:4.4px;height:0.993px;background:#34537c"></div>
<div class="abs" style="left:0;top:158.88px;width:4.4px;height:0.993px;background:#34537c"></div>
<div class="abs" style="left:0;top:159.87px;width:4.4px;height:0.993px;background:#34537c"></div>
<div class="abs" style="left:0;top:160.87px;width:4.4px;height:0.993px;background:#34537c"></div>
<div class="abs" style="left:0;top:161.86px;width:4.4px;height:0.993px;background:#34537c"></div>
<div class="abs" style="left:0;top:162.85px;width:3.1px;height:0.993px;background:#34537c"></div>
</div>
<div class="abs" style="left:521px;top:0;width:1px;height:798px;background:#2b2b2b"></div>
<div class="abs" style="left:521.5px;top:612.2px;width:12px;height:2px;background:#949494"></div>
</div>
<div class="abs" style="left:556px;top:120px;width:115px;height:32.5px;background:#3f3f46"></div>
<div class="abs" style="left:565.5px;top:132.7px;width:7px;height:7px;border-radius:50%;background:#55555f"></div>
<div class="ct" id="f_tab" style="left:576.5px;top:130.7px;font-size:12.7px;font-weight:bold;color:#fafafa;letter-spacing:-0.254px">main.asm</div>
<svg style="left:648.7px;top:134.2px" width="6.2" height="6.2" viewBox="0 0 7 7"><path d="M0.7 0.7 L6.3 6.3 M6.3 0.7 L0.7 6.3" stroke="#c4c4cc" stroke-width="1.3" stroke-linecap="round"/></svg>
<div class="abs" style="left:556px;top:950.5px;width:549px;height:39px;background:#27272a;border-top:1px solid #303035"></div>
<div class="btn" style="left:1021.5px;top:957.5px;width:31.5px;height:25.7px"></div>
<svg style="left:1031.5px;top:963.8px" width="12" height="12" viewBox="0 0 12 12"><path d="M1.9 0.5 H8.6 L11.5 3.4 V10.1 Q11.5 11.5 10.1 11.5 H1.9 Q0.5 11.5 0.5 10.1 V1.9 Q0.5 0.5 1.9 0.5 Z" fill="#a1a1aa"/><rect x="2.3" y="1.9" width="6" height="2.6" rx="0.5" fill="#3f3f46"/><circle cx="6" cy="8" r="1.7" fill="#3f3f46"/></svg>
<div class="btn" style="left:1063.5px;top:957.5px;width:31.5px;height:25.7px"></div>
<svg style="left:1073.5px;top:963.8px" width="12" height="12" viewBox="0 0 12 12"><rect x="0.5" y="0.8" width="11" height="10.4" rx="1.5" fill="#a1a1aa"/><circle cx="3.4" cy="3.7" r="1.1" fill="#3f3f46"/><path d="M1.8 9.6 L4.3 6.4 L5.6 8 L7.6 5 L10.3 9.6 Z" fill="#3f3f46"/></svg>
<div class="abs" style="left:1105px;top:120px;width:2px;height:869px;background:#333338"></div>
<!-- chat -->
<div class="ct" id="f_ai" style="left:1116.7px;top:131.1px;font-size:12.3px;color:#f4f4f5;-webkit-text-stroke:0.45px #f4f4f5;letter-spacing:0.438px">AI Assistant</div>
<div class="abs" style="left:1195px;top:131px;width:11px;height:11px;border-radius:50%;background:#43c55e"></div>
<div class="ct" id="f_conn" style="left:1211px;top:131.3px;font-size:10.9px;color:#a1a1aa;letter-spacing:0.301px">Connected</div>
<svg style="left:1574px;top:131.6px" width="9.6" height="9.6" viewBox="0 0 10 10"><path d="M5 0.5 V9.5 M0.5 5 H9.5" stroke="#e4e4e7" stroke-width="1.15" stroke-linecap="round"/></svg>
<div class="ct" id="f_new" style="left:1591px;top:130.8px;font-size:12.7px;color:#e4e4e7;letter-spacing:0.035px">New Chat</div>
<div class="abs" style="left:1120px;top:167.2px;width:484px;height:64.5px;border-radius:7px;background:#2d5cf0"></div>
<div class="abs" style="left:1615px;top:167.2px;width:29px;height:29px;border-radius:50%;background:#2d5cf0"></div>
<div class="ct" id="f_you" style="left:1619px;top:176.3px;font-size:11.6px;font-weight:bold;color:#fff;letter-spacing:0.068px">You</div>
<div class="cl" id="f_u1" style="left:1131.5px;top:179.1px;color:#fff;letter-spacing:0.082px">Create me a program in main.asm that clears the screen to black and</div>
<div class="cl" id="f_u2" style="left:1131.5px;top:200.7px;color:#fff;letter-spacing:0.066px">draws a red square (16x16 pixels) in the center of the screen</div>
<div class="abs" style="left:1120px;top:246.3px;width:29px;height:29px;border-radius:50%;background:#9126ea"></div>
<div class="ct" id="f_aiav" style="left:1128.5px;top:255.5px;font-size:12.4px;font-weight:bold;color:#fff;letter-spacing:-0.328px">AI</div>
<div class="abs" style="left:1160px;top:246.4px;width:484px;height:410.4px;border-radius:7px;background:#27272a"></div>
<div class="cl" id="f_l1" style="left:1170.8px;top:258.3px;color:#f4f4f5;letter-spacing:0.150px">Your program has been successfully assembled and written to</div>
<div class="cl" id="f_l2" style="left:1170.8px;top:279.9px;color:#f4f4f5;letter-spacing:0.142px"><span class="ic">main.asm</span>. Here&#x27;s a quick overview of what the code does:</div>
<div class="cl" id="f_l4" style="left:1170.8px;top:323.1px;color:#f4f4f5;letter-spacing:0.186px">- Sets the video mode to 0 (256x160 @ 4bpp).</div>
<div class="cl" id="f_l5" style="left:1170.8px;top:344.7px;color:#f4f4f5;letter-spacing:0.118px">- Clears the screen to black by calling <span class="ic">clear_screen</span>.</div>
<div class="cl" id="f_l6" style="left:1170.8px;top:366.3px;color:#f4f4f5;letter-spacing:0.005px">- Draws a 16x16 red square centered at (X=112, Y=72) using nested</div>
<div class="cl" id="f_l7" style="left:1170.8px;top:387.9px;color:#f4f4f5;letter-spacing:0.100px">loops to call <span class="ic">draw_pixel</span> for each pixel.</div>
<div class="cl" id="f_l8" style="left:1170.8px;top:409.5px;color:#f4f4f5;letter-spacing:0.206px">- The <span class="ic">clear_screen</span> subroutine writes the color 0 (black) to each byte</div>
<div class="cl" id="f_l9" style="left:1170.8px;top:431.1px;color:#f4f4f5;letter-spacing:0.288px">of the framebuffer.</div>
<div class="cl" id="f_l10" style="left:1170.8px;top:452.7px;color:#f4f4f5;letter-spacing:0.195px">- The <span class="ic">draw_pixel</span> subroutine calculates the framebuffer address</div>
<div class="cl" id="f_l11" style="left:1170.8px;top:474.3px;color:#f4f4f5;letter-spacing:0.155px">based on the (X, Y) coordinates and draws the specified color (palette</div>
<div class="cl" id="f_l12" style="left:1170.8px;top:495.9px;color:#f4f4f5;letter-spacing:-0.018px">index 1 in this case).</div>
<div class="cl" id="f_l14" style="left:1170.8px;top:539.1px;color:#f4f4f5;letter-spacing:0.097px">To see the result, you should now assemble and run the code. If you</div>
<div class="cl" id="f_l15" style="left:1170.8px;top:560.7px;color:#f4f4f5;letter-spacing:0.097px">haven&#x27;t already, you can do so by calling <span class="ic">assemble_code</span> and then</div>
<div class="cl" id="f_l16" style="left:1170.8px;top:582.3px;color:#f4f4f5;letter-spacing:-0.487px"><span class="ic">run_debugger</span>.</div>
<div class="cl" id="f_l18" style="left:1170.8px;top:625.5px;color:#f4f4f5;letter-spacing:0.076px">Would you like to assemble and run the program now?</div>
<div class="abs" style="left:1107px;top:950.5px;width:551px;height:39px;background:#27272a;border-top:1px solid #303035"></div>
<div class="abs" style="left:1116px;top:957px;width:490px;height:26.8px;border-radius:5px;background:#3f3f46"></div>
<div class="ct" id="f_ask" style="left:1128px;top:964.9px;font-size:12.6px;color:#a1a1aa;letter-spacing:0.166px">Ask me anything...</div>
<div class="btn" style="left:1616.4px;top:957px;width:30.8px;height:26.8px"></div>
<svg style="left:1624.8px;top:962.9px" width="14.4" height="14.4" viewBox="0 0 14.4 14.4"><path d="M14.1 0.3 L0.5 5.5 Q-0.1 5.9 0.6 6.3 L5.5 8.5 L8.1 13.8 Q8.5 14.5 8.9 13.7 Z" fill="#a1a1aa"/><path d="M5.5 8.6 L11.2 3.4" stroke="#3f3f46" stroke-width="0.9" opacity="0.55"/></svg>
</div></div>
</div>
</body></html>
